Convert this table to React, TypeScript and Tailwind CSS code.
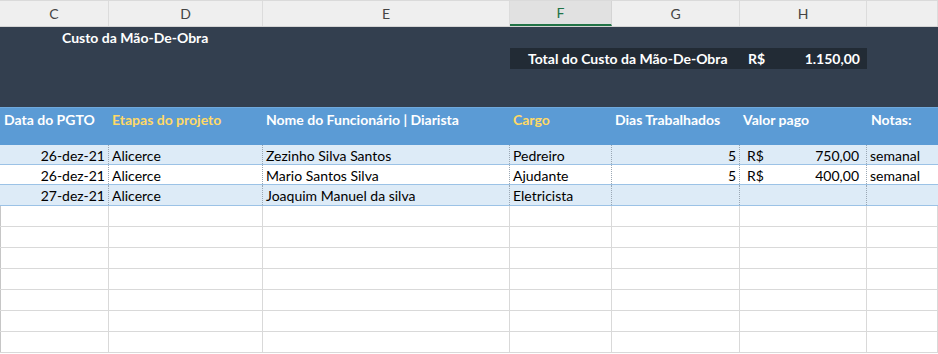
import React from 'react';

const cols = 'grid grid-cols-[109px_154px_247px_102px_128px_127px_71px]';

const letters = ['C', 'D', 'E', 'F', 'G', 'H', ''];

type Row = {
  data: string;
  etapa: string;
  nome: string;
  cargo: string;
  dias: string;
  valor: string;
  notas: string;
};

const rows: Row[] = [
  { data: '26-dez-21', etapa: 'Alicerce', nome: 'Zezinho Silva Santos', cargo: 'Pedreiro', dias: '5', valor: '750,00', notas: 'semanal' },
  { data: '26-dez-21', etapa: 'Alicerce', nome: 'Mario Santos Silva', cargo: 'Ajudante', dias: '5', valor: '400,00', notas: 'semanal' },
  { data: '27-dez-21', etapa: 'Alicerce', nome: 'Joaquim Manuel da silva', cargo: 'Eletricista', dias: '', valor: '', notas: '' },
];

const cell = 'h-full border-r border-dotted border-[#9aa7b4] px-[3px] flex items-center overflow-hidden whitespace-nowrap';

export default function App() {
  return (
    <div className="w-[938px] h-[354px] overflow-hidden bg-white text-[14px] text-black font-['Lato','Liberation_Sans',sans-serif]">
      {/* column letters */}
      <div className={`${cols} h-[27px] bg-[#efefef] border-b border-[#d4d4d4] border-t border-t-[#dadada]`}>
        {letters.map((l, i) => (
          <div
            key={i}
            className={
              l === 'F'
                ? 'flex items-center justify-center bg-[#e1e1e1] border-b-2 border-[#217346] text-[#217346] border-r border-r-[#d4d4d4]'
                : 'flex items-center justify-center text-[#444] border-r border-[#dcdcdc]'
            }
          >
            {l}
          </div>
        ))}
      </div>

      {/* dark title band */}
      <div className="h-[80px] bg-[#333f4f] font-bold text-white">
        <div className="h-[21px] pl-[62px] flex items-center">Custo da Mão-De-Obra</div>
        <div className={`${cols} h-[20px]`}>
          <div className="col-span-3" />
          <div className="col-span-3 bg-[#222b35] flex items-center pl-[18px] pr-[7px]">
            <span>Total do Custo da Mão-De-Obra</span>
            <span className="ml-auto w-[112px] flex">
              <span>R$</span>
              <span className="ml-auto">1.150,00</span>
            </span>
          </div>
        </div>
      </div>

      {/* table header */}
      <div className={`${cols} h-[38px] bg-[#5b9bd5] border-t border-[#6fa8dc] font-bold text-white`}>
        <div className="pl-[4px] pt-[1px] whitespace-nowrap">Data do PGTO</div>
        <div className="pl-[3px] pt-[1px] whitespace-nowrap text-[#ffd966]">Etapas do projeto</div>
        <div className="pl-[3px] pt-[1px] whitespace-nowrap">Nome do Funcionário | Diarista</div>
        <div className="pl-[3px] pt-[1px] whitespace-nowrap text-[#ffd966]">Cargo</div>
        <div className="pl-[3px] pt-[1px] whitespace-nowrap">Dias Trabalhados</div>
        <div className="pl-[3px] pt-[1px] whitespace-nowrap">Valor pago</div>
        <div className="pl-[4px] pt-[1px] whitespace-nowrap">Notas:</div>
      </div>

      {/* data rows */}
      {rows.map((r, i) => (
        <div
          key={i}
          className={`${cols} ${i === 2 ? 'h-[21px]' : 'h-[20px]'} border-b border-[#9bc2e6] ${i % 2 === 0 ? 'bg-[#ddebf7]' : 'bg-white'}`}
        >
          <div className={`${cell} justify-end`}>{r.data}</div>
          <div className={cell}>{r.etapa}</div>
          <div className={cell}>{r.nome}</div>
          <div className={cell}>{r.cargo}</div>
          <div className={`${cell} justify-end`}>{r.dias}</div>
          <div className={`${cell} pl-[7px] pr-[7px]`}>
            {r.valor && (
              <>
                <span>R$</span>
                <span className="ml-auto">{r.valor}</span>
              </>
            )}
          </div>
          <div className="h-full px-[3px] flex items-center whitespace-nowrap">{r.notas}</div>
        </div>
      ))}

      {/* empty grid */}
      {Array.from({ length: 7 }).map((_, i) => (
        <div key={i} className={`${cols} h-[21px] border-b border-[#d9d9d9]`}>
          {letters.map((_, j) => (
            <div key={j} className={j === 0 ? 'border-l border-[#c6c6c6] border-r border-r-[#d9d9d9]' : 'border-r border-[#d9d9d9]'} />
          ))}
        </div>
      ))}
    </div>
  );
}
